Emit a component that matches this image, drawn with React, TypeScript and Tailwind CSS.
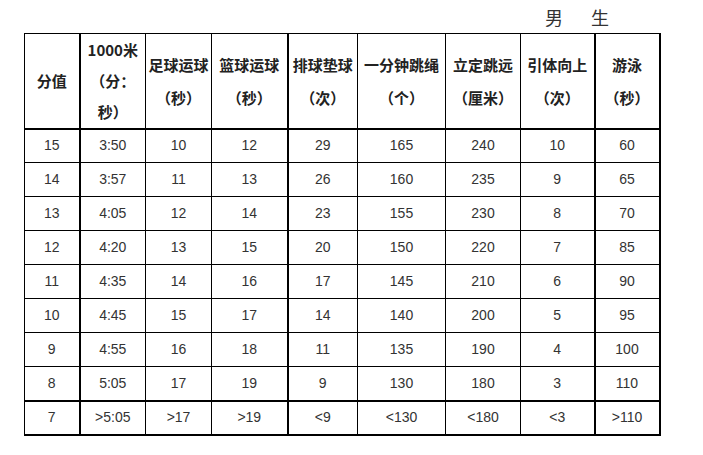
import React from 'react'

const COLS = [55, 66, 66, 76, 70, 88, 75, 74, 65]

const ROWS: string[][] = [
  ['15', '3:50', '10', '12', '29', '165', '240', '10', '60'],
  ['14', '3:57', '11', '13', '26', '160', '235', '9', '65'],
  ['13', '4:05', '12', '14', '23', '155', '230', '8', '70'],
  ['12', '4:20', '13', '15', '20', '150', '220', '7', '85'],
  ['11', '4:35', '14', '16', '17', '145', '210', '6', '90'],
  ['10', '4:45', '15', '17', '14', '140', '200', '5', '95'],
  ['9', '4:55', '16', '18', '11', '135', '190', '4', '100'],
  ['8', '5:05', '17', '19', '9', '130', '180', '3', '110'],
  ['7', '>5:05', '>17', '>19', '<9', '<130', '<180', '<3', '>110'],
]

// thick vertical rules after these column indexes
const thickLeft = (i: number) => i === 1 || i === 4 || i === 8

export default function App() {
  return (
    <div className="w-[703px] h-[455px] bg-white text-[#222]" style={{ fontFamily: '"Liberation Sans", "Noto Sans CJK SC", sans-serif' }}>
      {/* Title */}
      <div className="h-[33px] flex items-center pl-[545px] gap-[28px] text-[18px] leading-none text-[#333]" style={{ fontFamily: '"Noto Sans CJK SC", sans-serif' }}>
        <span>男</span>
        <span>生</span>
      </div>

      <div className="pl-[24px]">
        <table className="border-collapse table-fixed w-[636px] border-t border-l border-r-2 border-b-2 border-black">
          <colgroup>
            {COLS.map((w, i) => <col key={i} style={{ width: w }} />)}
          </colgroup>
          <thead>
            <tr className="h-[95px] border-b-2 border-black text-[15px] font-bold text-center leading-[31px]" style={{ fontFamily: '"Noto Sans CJK SC", sans-serif' }}>
              <th className="border border-black p-0">分值</th>
              <th className="border border-black border-l-2 p-0 font-bold">1000米<br />（分：<br />秒）</th>
              <th className="border border-black p-0 font-bold leading-[33px]">足球运球<br />（秒）</th>
              <th className="border border-black p-0 font-bold leading-[33px]">篮球运球<br />（秒）</th>
              <th className="border border-black border-l-2 p-0 font-bold leading-[33px]">排球垫球<br />（次）</th>
              <th className="border border-black p-0 font-bold leading-[33px]">一分钟跳绳<br />（个）</th>
              <th className="border border-black p-0 font-bold leading-[33px]">立定跳远<br />（厘米）</th>
              <th className="border border-black p-0 font-bold leading-[33px]">引体向上<br />（次）</th>
              <th className="border border-black border-l-2 p-0 font-bold leading-[33px]">游泳<br />（秒）</th>
            </tr>
          </thead>
          <tbody>
            {ROWS.map((r, ri) => (
              <tr key={ri} className={`h-[34px] ${ri === 0 || ri === ROWS.length - 1 ? 'border-t-2' : ''} border-black`}>
                {r.map((c, ci) => (
                  <td key={ci}
                    className={`border border-black p-0 text-center text-[14px] text-[#333] ${thickLeft(ci) ? 'border-l-2' : ''} ${ri === ROWS.length - 1 ? 'border-t-2' : ''}`}>
                    {c}
                  </td>
                ))}
              </tr>
            ))}
          </tbody>
        </table>
      </div>
    </div>
  )
}
